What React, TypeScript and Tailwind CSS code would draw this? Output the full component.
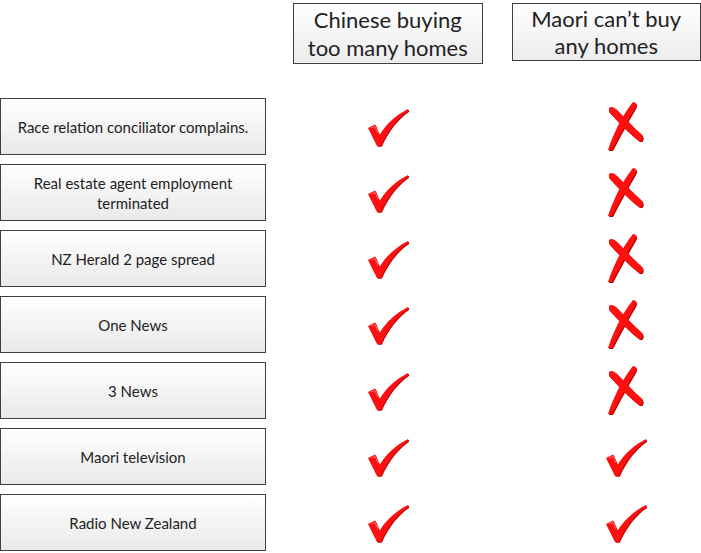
import React from 'react';

const rows = [
  { label: 'Race relation conciliator complains.', maori: false },
  { label: 'Real estate agent employment terminated', maori: false },
  { label: 'NZ Herald 2 page spread', maori: false },
  { label: 'One News', maori: false },
  { label: '3 News', maori: false },
  { label: 'Maori television', maori: true },
  { label: 'Radio New Zealand', maori: true },
];

const checkPath =
  'M1 21 L8 17.5 L12.5 28 C19 17 29 8 41 2 L41.5 4 C31 11 21 23 14 39 L10 39 Z';

function Check() {
  return (
    <svg width="42" height="40" viewBox="0 0 42 40">
      <path d={checkPath} fill="#b80000" transform="translate(0.8 0.8)" />
      <path d={checkPath} fill="#ff1010" />
      <path d="M4 21 L8 19.5 L11 26" stroke="#ff6a6a" strokeWidth="1" fill="none" />
    </svg>
  );
}

// two tapered brush strokes
const crossA = 'M3 6 C5 4 8 5 11 8 C19 16 27 25 35 32 C38 35 37 40 33 39 C24 32 12 20 3 10 Z';
const crossB = 'M27 0 C30 0 31 3 29 6 C22 18 14 33 6 48 L2 48 C7 33 15 15 27 0 Z';

function Cross() {
  return (
    <svg width="40" height="50" viewBox="0 0 40 50">
      <g transform="translate(1 1)" fill="#b80000">
        <path d={crossA} />
        <path d={crossB} />
      </g>
      <g fill="#ff1010">
        <path d={crossA} />
        <path d={crossB} />
      </g>
    </svg>
  );
}

export default function App() {
  return (
    <div
      className="w-[701px] h-[553px] bg-white text-[#222] overflow-hidden"
      style={{ fontFamily: 'Lato, "Open Sans", sans-serif' }}
    >
      <div className="flex gap-[29px] pl-[293px] pt-[3px]">
        <div className="w-[190px] h-[61px] border border-[#404040] bg-linear-to-b from-white to-[#ececec] flex items-center justify-center text-center text-[22px] leading-[28px]">
          Chinese buying
          <br />
          too many homes
        </div>
        <div className="w-[190px] h-[58px] border border-[#404040] bg-linear-to-b from-white to-[#ececec] flex items-center justify-center text-center text-[22px] leading-[27px]">
          Maori can’t buy
          <br />
          any homes
        </div>
      </div>

      <div className="flex flex-col gap-[9px] mt-[34px]">
        {rows.map((r) => (
          <div key={r.label} className="flex items-center">
            <div className="w-[266px] h-[57px] border border-[#404040] bg-linear-to-b from-white to-[#e9e9e9] flex items-center justify-center text-center text-[15px] leading-[20px] px-3">
              {r.label}
            </div>
            <div className="w-[80px] ml-[82px] flex justify-center">
              <Check />
            </div>
            <div className="w-[80px] ml-[158px] flex justify-center">
              {r.maori ? <Check /> : <Cross />}
            </div>
          </div>
        ))}
      </div>
    </div>
  );
}
